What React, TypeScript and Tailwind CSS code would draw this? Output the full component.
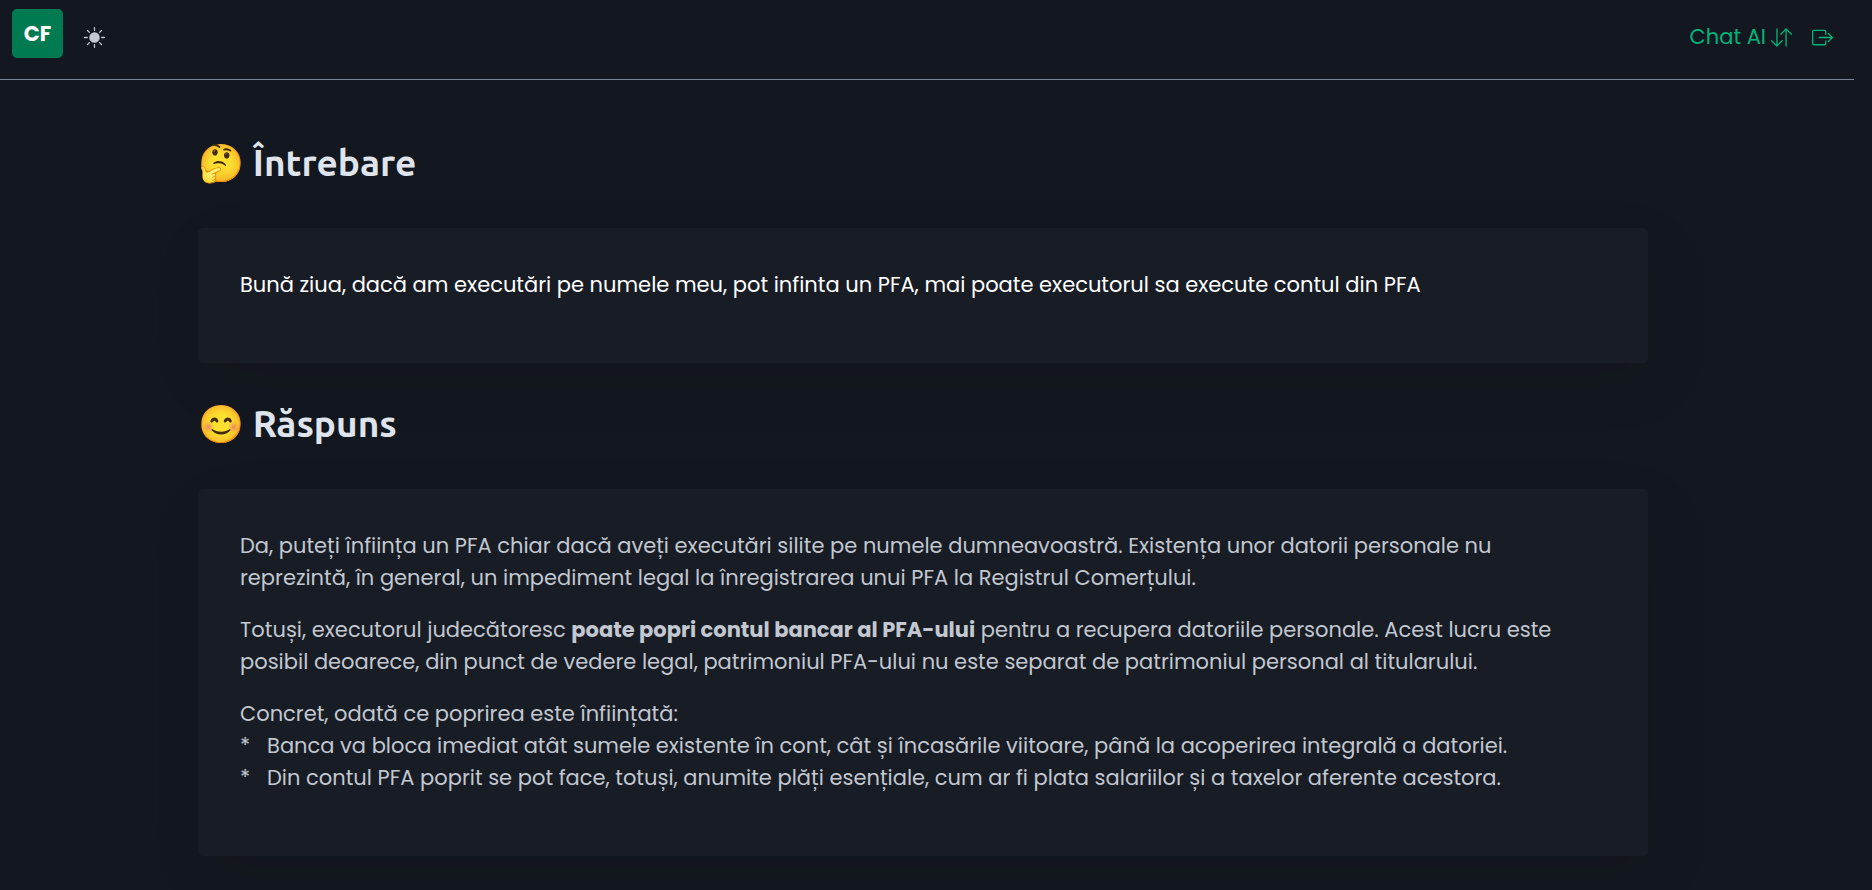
import { BsArrowDownUp, BsBoxArrowRight, BsSunFill } from "react-icons/bs";
import type { ReactNode } from "react";

function SectionTitle({ children }: { children: ReactNode }) {
    return (
        <h2 className="pb-1 font-[Ubuntu,'Noto_Sans',sans-serif] text-[37px] leading-10 font-bold text-[#dfe3eb]">
            {children}
        </h2>
    );
}

function MessageCard({ children }: { children: ReactNode }) {
    return (
        <article className="flex flex-col gap-5 rounded-[5px] bg-[#181c25] px-[42px] pt-[41px] pb-[62px] shadow-[8px_20px_60px_rgba(7,9,12,0.08)]">
            {children}
        </article>
    );
}

export default function App() {
    return (
        <div className="min-h-screen overflow-hidden bg-[#13171f] font-[Poppins,Inter,sans-serif] text-[21px] leading-8 text-[#c2c7d0]">
            <header className="mr-[18px] flex h-20 items-start justify-between border-b border-[#7b8495] pt-[9px] pr-[21px] pl-3">
                <div className="flex items-center gap-[21px]">
                    <a
                        href="#"
                        className="flex h-[49px] w-[51px] items-center justify-center rounded-[5px] bg-[#007a50] font-bold text-white"
                    >
                        CF
                    </a>
                    <button type="button" aria-label="Temă" className="mt-[7px]">
                        <BsSunFill />
                    </button>
                </div>
                <nav className="flex items-center gap-5 pt-3 text-[#00b478]">
                    <a href="#" className="flex items-center gap-[5px]">
                        Chat AI
                        <BsArrowDownUp />
                    </a>
                    <a href="#" aria-label="Ieșire">
                        <BsBoxArrowRight />
                    </a>
                </nav>
            </header>

            <main className="mr-[26px] pt-[63px] pb-8">
                <div className="mx-auto flex max-w-[1450px] flex-col gap-[41px]">
                    <SectionTitle>🤔 Întrebare</SectionTitle>
                    <MessageCard>
                        <p className="text-white">
                            Bună ziua, dacă am executări pe numele meu, pot infinta un PFA, mai poate executorul sa
                            execute contul din PFA
                        </p>
                    </MessageCard>
                    <SectionTitle>😊 Răspuns</SectionTitle>
                    <MessageCard>
                        <p>
                            Da, puteți înființa un PFA chiar dacă aveți executări silite pe numele dumneavoastră.
                            Existența unor datorii personale nu reprezintă, în general, un impediment legal la
                            înregistrarea unui PFA la Registrul Comerțului.
                        </p>
                        <p>
                            Totuși, executorul judecătoresc <strong>poate popri contul bancar al PFA-ului</strong>{" "}
                            pentru a recupera datoriile personale. Acest lucru este posibil deoarece, din punct de
                            vedere legal, patrimoniul PFA-ului nu este separat de patrimoniul personal al titularului.
                        </p>
                        <p>
                            Concret, odată ce poprirea este înființată:
                            <br />
                            *&nbsp;&nbsp; Banca va bloca imediat atât sumele existente în cont, cât și încasările
                            viitoare, până la acoperirea integrală a datoriei.
                            <br />
                            *&nbsp;&nbsp; Din contul PFA poprit se pot face, totuși, anumite plăți esențiale, cum ar fi
                            plata salariilor și a taxelor aferente acestora.
                        </p>
                    </MessageCard>
                </div>
            </main>
        </div>
    );
}
